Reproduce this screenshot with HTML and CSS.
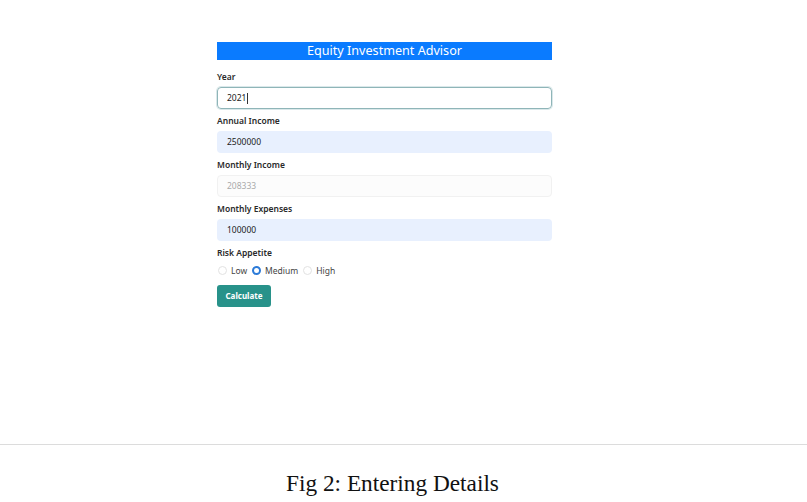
FILE: index.html
```html
<!DOCTYPE html>
<html>
<head>
<meta charset="utf-8">
<link rel="stylesheet" href="styles.css">
</head>
<body>
<div class="page">
  <div class="shot">
    <form class="form">
      <div class="title">Equity Investment Advisor</div>
      <div class="field">
        <label class="label">Year</label>
        <div class="input focus">2021<span class="caret"></span></div>
      </div>
      <div class="field">
        <label class="label">Annual Income</label>
        <div class="input auto">2500000</div>
      </div>
      <div class="field">
        <label class="label">Monthly Income</label>
        <div class="input disabled">208333</div>
      </div>
      <div class="field">
        <label class="label">Monthly Expenses</label>
        <div class="input auto">100000</div>
      </div>
      <div class="field">
        <label class="label">Risk Appetite</label>
        <div class="radios">
          <span class="radio"></span><span class="rlabel">Low</span>
          <span class="radio on"></span><span class="rlabel">Medium</span>
          <span class="radio"></span><span class="rlabel">High</span>
        </div>
      </div>
      <div class="btnrow"><span class="btn">Calculate</span></div>
    </form>
  </div>
  <div class="rule"></div>
  <div class="caption">Fig 2: Entering Details</div>
</div>
</body>
</html>
```

FILE: styles.css
```css
html, body {
  margin: 0;
  padding: 0;
  background: #fff;
}
.page {
  width: 807px;
  height: 502px;
  display: flex;
  flex-direction: column;
}
.shot {
  height: 444px;
  display: flex;
  justify-content: flex-start;
  padding-left: 217px;
  padding-top: 42px;
  box-sizing: border-box;
}
.form {
  width: 335px;
  display: flex;
  flex-direction: column;
  font-family: "Noto Sans", "Open Sans", sans-serif;
  color: #222;
  margin: 0;
}
.title {
  height: 18px;
  background: #0a7bff;
  color: #fff;
  font-size: 12.6px;
  line-height: 18px;
  text-align: center;
  margin-bottom: 10px;
}
.field {
  display: flex;
  flex-direction: column;
}
.label {
  font-size: 8.5px;
  font-weight: 600;
  line-height: 11px;
  height: 12px;
  padding-top: 1px;
  box-sizing: border-box;
  margin-bottom: 5px;
  color: #2a2a2a;
}
.input {
  height: 22px;
  box-sizing: border-box;
  border-radius: 4px;
  padding-left: 9px;
  font-size: 8.5px;
  line-height: 20px;
  margin-bottom: 5px;
  border: 1px solid transparent;
  color: #222;
  display: flex;
  align-items: center;
}
.input.focus {
  border: 1px solid #8fb5b8;
  box-shadow: 0 0 0 1px rgba(150, 190, 195, 0.35);
}
.caret {
  display: inline-block;
  width: 1px;
  height: 11px;
  background: #333;
  margin-left: 1px;
}
.input.auto {
  background: #e8f0fe;
}
.input.disabled {
  background: #fcfcfc;
  border: 1px solid #f1f1f1;
  color: #aaa;
}
.radios {
  display: flex;
  align-items: center;
  height: 12px;
  margin-top: 1px;
  font-size: 8.5px;
  color: #444;
}
.radio {
  width: 9px;
  height: 9px;
  box-sizing: border-box;
  border-radius: 50%;
  border: 1px solid #e2e2e2;
  margin-left: 1px;
  margin-right: 4px;
}
.radio.on {
  border: 2.5px solid #2b7ad8;
  background: #fff;
}
.rlabel {
  margin-right: 4px;
}
.btnrow {
  display: flex;
  margin-top: 9px;
}
.btn {
  width: 54px;
  height: 22px;
  border-radius: 3px;
  background: #28928a;
  color: #fff;
  font-size: 8px;
  font-weight: 700;
  line-height: 22px;
  text-align: center;
}
.rule {
  height: 1px;
  background: #dcdcdc;
}
.caption {
  text-align: center;
  font-family: "Liberation Serif", "Times New Roman", serif;
  font-size: 23.3px;
  line-height: 26px;
  margin-top: 25px;
  color: #111;
  margin-left: -22px;
}
```
